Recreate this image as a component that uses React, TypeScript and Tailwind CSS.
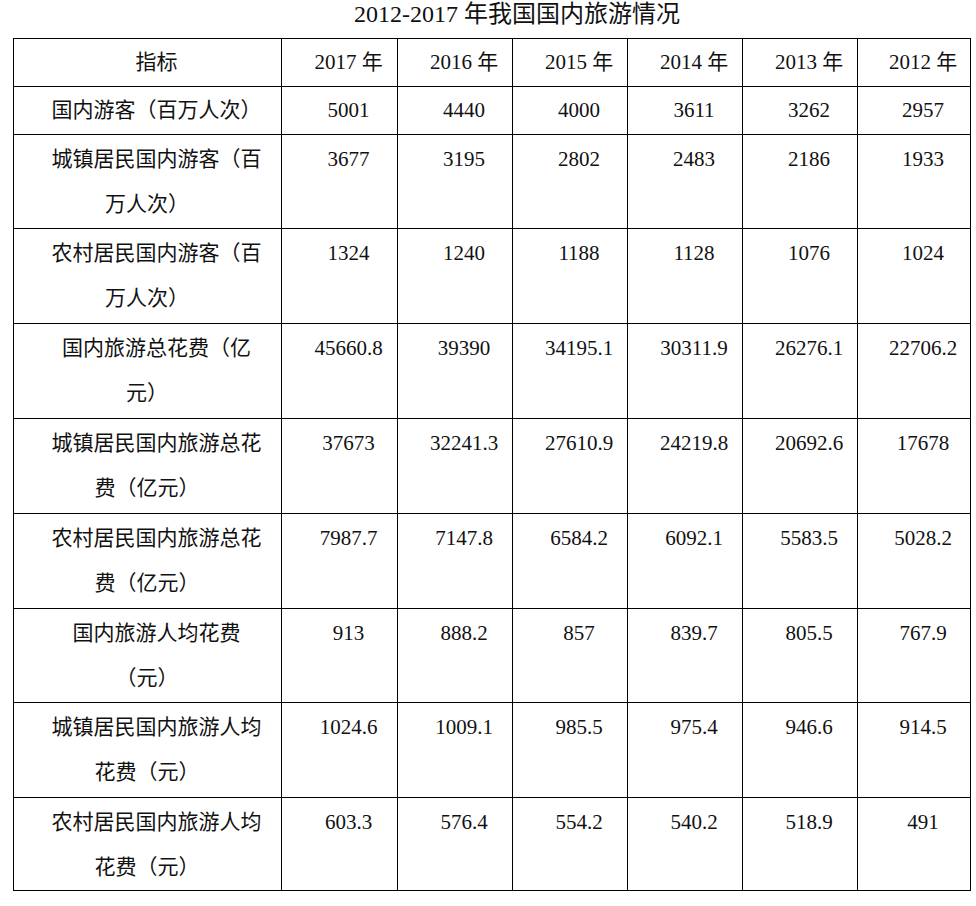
type Row = {
  label: string[];
  values: string[];
  h: string;
};

const years = ['2017 年', '2016 年', '2015 年', '2014 年', '2013 年', '2012 年'];

const colW = ['w-[268px]', 'w-[116px]', 'w-[115px]', 'w-[115px]', 'w-[115px]', 'w-[115px]', 'w-[113px]'];

const rows: Row[] = [
  { label: ['国内游客（百万人次）'], values: ['5001', '4440', '4000', '3611', '3262', '2957'], h: 'h-[48px]' },
  { label: ['城镇居民国内游客（百', '万人次）'], values: ['3677', '3195', '2802', '2483', '2186', '1933'], h: 'h-[94px]' },
  { label: ['农村居民国内游客（百', '万人次）'], values: ['1324', '1240', '1188', '1128', '1076', '1024'], h: 'h-[95px]' },
  { label: ['国内旅游总花费（亿', '元）'], values: ['45660.8', '39390', '34195.1', '30311.9', '26276.1', '22706.2'], h: 'h-[95px]' },
  { label: ['城镇居民国内旅游总花', '费（亿元）'], values: ['37673', '32241.3', '27610.9', '24219.8', '20692.6', '17678'], h: 'h-[95px]' },
  { label: ['农村居民国内旅游总花', '费（亿元）'], values: ['7987.7', '7147.8', '6584.2', '6092.1', '5583.5', '5028.2'], h: 'h-[95px]' },
  { label: ['国内旅游人均花费', '（元）'], values: ['913', '888.2', '857', '839.7', '805.5', '767.9'], h: 'h-[94px]' },
  { label: ['城镇居民国内旅游人均', '花费（元）'], values: ['1024.6', '1009.1', '985.5', '975.4', '946.6', '914.5'], h: 'h-[95px]' },
  { label: ['农村居民国内旅游人均', '花费（元）'], values: ['603.3', '576.4', '554.2', '540.2', '518.9', '491'], h: 'h-[93px]' },
];

function Cell({ col, tall, children }: { col: number; tall?: boolean; children: React.ReactNode }) {
  return (
    <div
      className={`${colW[col]} shrink-0 h-full border-r border-black pl-[18px] text-center leading-[45px] ${
        tall ? 'pt-[2px]' : 'pt-[1px]'
      }`}
    >
      {children}
    </div>
  );
}

export default function App() {
  return (
    <div className="w-[976px] h-[906px] bg-white text-[21px] text-[#111] font-['Liberation_Serif','Noto_Sans_CJK_SC',serif]">
      {/* Title */}
      <div className="ml-[13px] w-[958px] h-[38px] pl-[50px] text-center text-[24px] leading-[28px] whitespace-nowrap">
        2012-2017 年我国国内旅游情况
      </div>

      {/* Table */}
      <div className="ml-[13px] w-[958px] border-l border-t border-black">
        <div className="flex h-[48px] border-b border-black">
          <Cell col={0}>指标</Cell>
          {years.map((y, i) => (
            <Cell key={y} col={i + 1}>
              <span className="whitespace-nowrap">{y}</span>
            </Cell>
          ))}
        </div>

        {rows.map((r) => {
          const tall = r.label.length > 1;
          return (
            <div key={r.label.join('')} className={`flex ${r.h} border-b border-black`}>
              <Cell col={0} tall={tall}>
                <span className="block whitespace-nowrap">{r.label[0]}</span>
                {r.label[1] && <span className="block whitespace-nowrap pr-[19px]">{r.label[1]}</span>}
              </Cell>
              {r.values.map((v, i) => (
                <Cell key={i} col={i + 1} tall={tall}>
                  {v}
                </Cell>
              ))}
            </div>
          );
        })}
      </div>
    </div>
  );
}
